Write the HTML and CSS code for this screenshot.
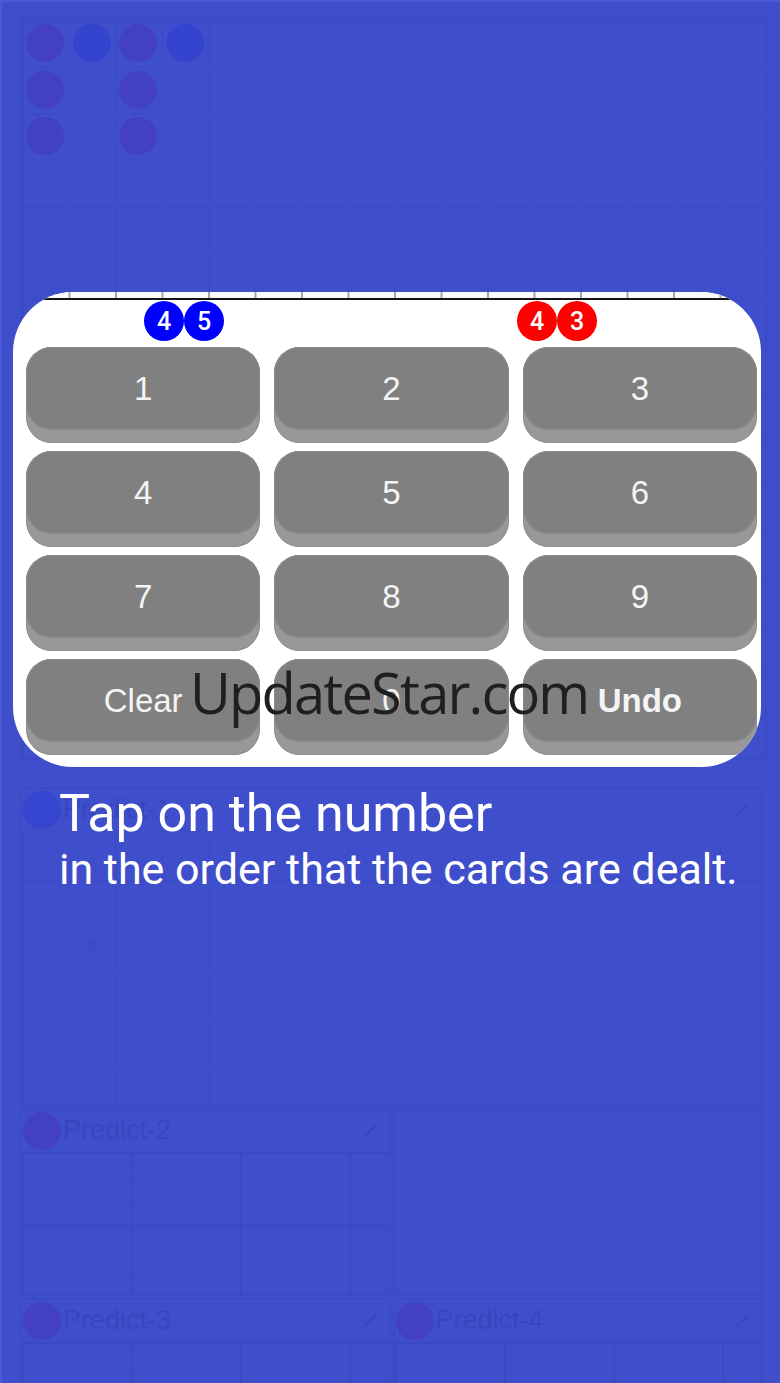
FILE: index.html
```html
<!DOCTYPE html>
<html lang="en">
<head>
<meta charset="utf-8">
<title>Baccarat Predictor tutorial</title>
<link rel="stylesheet" href="styles.css">
</head>
<body>
<div class="app">
  <section class="panel board">
    <div class="beads">
      <span class="bead red"></span><span class="bead blue"></span><span class="bead red"></span><span class="bead blue"></span>
      <span class="bead red"></span><span class="bead none"></span><span class="bead red"></span><span class="bead none"></span>
      <span class="bead red"></span><span class="bead none"></span><span class="bead red"></span><span class="bead none"></span>
    </div>
  </section>

  <section class="panel predict wide">
    <header class="p-head">
      <span class="dot blue"></span><span class="p-title">Predict-1</span>
      <svg class="pencil" width="14" height="14" viewBox="0 0 14 14"><path d="M2 12 L12 2" stroke="#3846bb" stroke-width="2" stroke-linecap="round"/></svg>
    </header>
    <div class="p-grid big">
      <span class="mark m1">✓</span><span class="mark m2">✗</span><span class="mark m3">›</span>
    </div>
  </section>

  <div class="row r2">
    <section class="panel predict">
      <header class="p-head">
        <span class="dot red"></span><span class="p-title">Predict-2</span>
        <svg class="pencil" width="14" height="14" viewBox="0 0 14 14"><path d="M2 12 L12 2" stroke="#3846bb" stroke-width="2" stroke-linecap="round"/></svg>
      </header>
      <div class="p-grid small"></div>
    </section>
    <section class="panel blank"></section>
  </div>

  <div class="row r3">
    <section class="panel predict">
      <header class="p-head">
        <span class="dot red"></span><span class="p-title">Predict-3</span>
        <svg class="pencil" width="14" height="14" viewBox="0 0 14 14"><path d="M2 12 L12 2" stroke="#3846bb" stroke-width="2" stroke-linecap="round"/></svg>
      </header>
      <div class="p-grid small"></div>
    </section>
    <section class="panel predict">
      <header class="p-head">
        <span class="dot red"></span><span class="p-title">Predict-4</span>
        <svg class="pencil" width="14" height="14" viewBox="0 0 14 14"><path d="M2 12 L12 2" stroke="#3846bb" stroke-width="2" stroke-linecap="round"/></svg>
      </header>
      <div class="p-grid small"></div>
    </section>
  </div>
</div>

<div class="overlay">
  <div class="card">
    <div class="ruler"></div>
    <div class="bubbles">
      <div class="pair"><span class="bub b">4</span><span class="bub b">5</span></div>
      <div class="pair"><span class="bub r">4</span><span class="bub r">3</span></div>
    </div>
    <div class="keys">
      <div class="key"><div class="face">1</div></div>
      <div class="key"><div class="face">2</div></div>
      <div class="key"><div class="face">3</div></div>
      <div class="key"><div class="face">4</div></div>
      <div class="key"><div class="face">5</div></div>
      <div class="key"><div class="face">6</div></div>
      <div class="key"><div class="face">7</div></div>
      <div class="key"><div class="face">8</div></div>
      <div class="key"><div class="face">9</div></div>
      <div class="key"><div class="face">Clear</div></div>
      <div class="key"><div class="face">0</div></div>
      <div class="key"><div class="face bold">Undo</div></div>
    </div>
    <div class="watermark">UpdateStar.com</div>
  </div>
  <div class="caption">
    <p class="l1">Tap on the number</p>
    <p class="l2">in the order that the cards are dealt.</p>
  </div>
</div>
</body>
</html>
```

FILE: styles.css
```css
html, body {
  margin: 0;
  padding: 0;
}
body {
  width: 780px;
  height: 1383px;
  overflow: hidden;
  background: #3f4fcc;
  position: relative;
  font-family: "Liberation Sans", Arial, sans-serif;
  box-shadow: inset 2px 2px 0 #4a5ad8;
}

/* ---------- dimmed app behind the tutorial ---------- */
.app {
  padding: 17px 0 0 20px;
  display: flex;
  flex-direction: column;
}
.panel {
  box-sizing: border-box;
  border: 2px solid #3b4ac5;
  background-color: #3f4fcb;
}
.board {
  width: 747px;
  height: 743px;
  background-image:
    linear-gradient(to right, #3c4bc7 1.5px, transparent 1.5px),
    linear-gradient(to bottom, #3c4bc7 1.5px, transparent 1.5px);
  background-size: 46.5px 46.5px;
  background-position: 0 1px;
}
.beads {
  display: grid;
  grid-template-columns: repeat(4, 46.5px);
  grid-auto-rows: 46.5px;
  padding-top: 1px;
}
.bead {
  width: 38px;
  height: 38px;
  border-radius: 50%;
  align-self: center;
  justify-self: center;
}
.bead.red { background: #4340c4; }
.bead.blue { background: #3444cf; }
.bead.none { background: transparent; }

.predict.wide {
  width: 743px;
  height: 320px;
  margin-top: 27px;
}
.p-head {
  height: 42px;
  display: flex;
  align-items: center;
  border-bottom: 1px solid #3d4cc8;
  box-sizing: border-box;
}
.dot {
  width: 38px;
  height: 38px;
  border-radius: 50%;
  margin-left: 1px;
  flex: none;
}
.dot.red { background: #4440c3; }
.dot.blue { background: #3545cf; }
.p-title {
  margin-left: 2px;
  font-size: 27px;
  color: #3846bd;
  flex: 1;
}
.pencil {
  margin-right: 12px;
}
.p-grid {
  position: relative;
  height: calc(100% - 42px);
}
.p-grid.big {
  background-image:
    linear-gradient(to right, #3c4bc7 1.5px, transparent 1.5px),
    linear-gradient(to bottom, #3c4bc7 1.5px, transparent 1.5px);
  background-size: 46.5px 46.5px;
  background-position: 0 -44px;
}
.p-grid.small {
  background-image:
    linear-gradient(to right, #3a49c4 2px, transparent 2px),
    linear-gradient(to bottom, #3a49c4 2px, transparent 2px),
    linear-gradient(to right, #3d4cc8 1px, transparent 1px),
    linear-gradient(to bottom, #3d4cc8 1px, transparent 1px);
  background-size: 109px 73px, 109px 73px, 22.7px 22.7px, 22.7px 22.7px;
  background-position: 0 0, 0 0, 0 0, 0 8px;
}
.mark {
  position: absolute;
  color: #3b4ac4;
  font-size: 18px;
}
.m1 { left: 14px; top: 60px; }
.m2 { left: 62px; top: 104px; }
.m3 { left: 64px; top: 148px; }

.row {
  display: flex;
  gap: 2px;
  width: 743px;
}
.row .panel {
  flex: 1;
}
.r2 {
  margin-top: 1px;
  height: 188px;
}
.r3 {
  margin-top: 2px;
  height: 110px;
}

/* ---------- tutorial overlay ---------- */
.overlay {
  position: absolute;
  left: 0;
  top: 0;
  width: 780px;
  display: flex;
  flex-direction: column;
}
.card {
  position: relative;
  margin: 292px 0 0 13px;
  width: 748px;
  height: 475px;
  background: #fff;
  border-radius: 60px;
  overflow: hidden;
  box-sizing: border-box;
}
.ruler {
  height: 6px;
  border-bottom: 2px solid #151515;
  background-image: linear-gradient(to right, #a6a6a6 2px, transparent 2px);
  background-size: 46.5px 100%;
  background-position: 9px 0;
  background-color: #fbfbfb;
}
.bubbles {
  height: 47px;
  display: flex;
  align-items: flex-start;
  padding: 1px 0 0 131px;
  box-sizing: border-box;
  gap: 293px;
}
.pair {
  display: flex;
}
.bub {
  width: 40px;
  height: 40px;
  border-radius: 50%;
  display: flex;
  align-items: center;
  justify-content: center;
  color: #fff;
  font-family: Roboto, "Liberation Sans", sans-serif;
  font-weight: 500;
  font-size: 25px;
}
.bub.b { background: #0000fe; }
.bub.r { background: #fe0000; }

.keys {
  display: grid;
  grid-template-columns: repeat(3, 1fr);
  grid-auto-rows: 96px;
  gap: 8px 14px;
  padding: 0 4px 12px 13px;
}
.key {
  background: #989898;
  border-radius: 26px;
  box-shadow: inset 0 0 0 1px #8d8d8d;
}
.face {
  height: 83px;
  border-radius: 26px;
  background: #808080;
  box-shadow: inset 0 0 0 1px #8a8a8a;
  display: flex;
  align-items: center;
  justify-content: center;
  color: #f4f4f4;
  font-size: 33px;
}
.face.bold {
  font-weight: 700;
}
.watermark {
  position: absolute;
  left: 177px;
  top: 372px;
  font-family: "Open Sans", "Noto Sans", sans-serif;
  font-size: 56px;
  line-height: 56px;
  letter-spacing: -1.8px;
  color: #1f1f1f;
  white-space: nowrap;
}
.caption {
  margin: 18px 0 0 59px;
  color: #fff;
  font-family: Roboto, "Liberation Sans", sans-serif;
}
.caption p {
  margin: 0;
  white-space: nowrap;
}
.l1 {
  font-size: 52px;
  line-height: 58px;
}
.l2 {
  font-size: 43px;
  line-height: 52px;
}
```
